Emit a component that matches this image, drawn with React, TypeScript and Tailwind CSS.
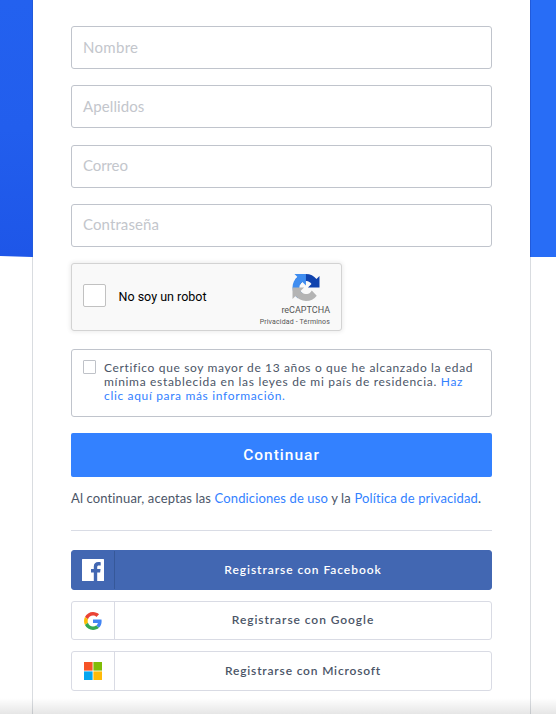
import React from "react";

const fields = [
  { label: "Nombre", box: "mt-[26px]", text: "tracking-[0.3px]" },
  { label: "Apellidos", box: "mt-4", text: "tracking-[0.1px]" },
  { label: "Correo", box: "mt-[17px] pb-0.5", text: "tracking-[-0.1px]" },
  { label: "Contraseña", box: "mt-4 pb-0.5", text: "tracking-[0.1px]" },
];

function RecaptchaLogo() {
  return (
    <svg width="28" height="27" viewBox="0 0 64 64">
      <path fill="#1043ae" d="M64 31.955l-.016-1.37V4.687l-7.16 7.16C50.965 4.674 42.033.093 32.03.093c-10.4 0-19.646 4.96-25.49 12.64l11.736 11.86a15.55 15.55 0 0 1 4.754-5.334c2.05-1.6 4.952-2.906 8.968-2.906.485 0 .86.057 1.135.163 4.976.393 9.288 3.14 11.828 7.124l-8.307 8.307L64 31.953" />
      <path fill="#3f8df0" d="M31.862.094l-1.37.016H4.594l7.16 7.16C4.58 13.147 0 22.08 0 32.082c0 10.4 4.96 19.646 12.64 25.49L24.5 45.835a15.55 15.55 0 0 1-5.334-4.754c-1.6-2.05-2.906-4.952-2.906-8.968 0-.485.057-.86.163-1.135.393-4.976 3.14-9.288 7.124-11.828l8.307 8.307L31.86.095" />
      <path fill="#b4b4b4" d="M.001 32.045l.016 1.37v25.898l7.16-7.16c5.86 7.173 14.79 11.754 24.793 11.754 10.4 0 19.646-4.96 25.49-12.64l-11.736-11.86a15.55 15.55 0 0 1-4.754 5.334c-2.05 1.6-4.952 2.906-8.968 2.906-.485 0-.86-.057-1.135-.163-4.976-.393-9.288-3.14-11.828-7.124l8.307-8.307L0 32.045" />
    </svg>
  );
}

function FacebookLogo() {
  return (
    <svg width="22" height="22" viewBox="0 0 22 22">
      <path fill="#fff" d="M.6 0h20.8a.6.6 0 0 1 .6.6v20.8a.6.6 0 0 1-.6.6h-6.2v-8.5h2.9l.5-3.4h-3.4V8c0-1 .4-1.6 1.7-1.6h1.8V3.3c-.5-.1-1.4-.2-2.5-.2-2.7 0-4.4 1.6-4.4 4.5v2.5H9v3.4h2.8V22H.6a.6.6 0 0 1-.6-.6V.6A.6.6 0 0 1 .6 0z" />
    </svg>
  );
}

function GoogleLogo() {
  return (
    <svg width="18" height="18" viewBox="0 0 48 48">
      <path fill="#EA4335" d="M24 9.5c3.54 0 6.71 1.22 9.21 3.6l6.85-6.85C35.9 2.38 30.47 0 24 0 14.62 0 6.51 5.38 2.56 13.22l7.98 6.19C12.43 13.72 17.74 9.5 24 9.5z" />
      <path fill="#4285F4" d="M46.98 24.55c0-1.57-.15-3.09-.38-4.55H24v9.02h12.94c-.58 2.96-2.26 5.48-4.78 7.18l7.73 6c4.51-4.18 7.09-10.36 7.09-17.65z" />
      <path fill="#FBBC05" d="M10.53 28.59c-.48-1.45-.76-2.99-.76-4.59s.27-3.14.76-4.59l-7.98-6.19C.92 16.46 0 20.12 0 24c0 3.88.92 7.54 2.56 10.78l7.97-6.19z" />
      <path fill="#34A853" d="M24 48c6.48 0 11.93-2.13 15.89-5.81l-7.73-6c-2.15 1.45-4.92 2.3-8.16 2.3-6.26 0-11.57-4.22-13.47-9.91l-7.98 6.19C6.51 42.62 14.62 48 24 48z" />
    </svg>
  );
}

function MicrosoftLogo() {
  return (
    <svg width="18" height="18" viewBox="0 0 18 18">
      <path fill="#f65326" d="M0 0h8.6v8.6H0z" />
      <path fill="#80bc06" d="M9.4 0H18v8.6H9.4z" />
      <path fill="#05a6f0" d="M0 9.4h8.6V18H0z" />
      <path fill="#ffba08" d="M9.4 9.4H18V18H9.4z" />
    </svg>
  );
}

export default function App() {
  return (
    <div className="relative h-[722px] w-[556px] overflow-hidden bg-white font-['Lato',sans-serif] text-[#4b5567]">
      <div className="flex h-[714px] justify-center bg-white">
        <div className="h-[257px] w-8 bg-linear-to-b from-[#2361ef] via-[#225eed] to-[#1e56e8] [clip-path:polygon(0_0,100%_0,100%_100%,0_256px)]" />
        <main className="h-[714px] w-[499px] border-x border-[#d9dce0] bg-white px-[38px] [border-image:linear-gradient(#215adb_257px,#d9dce0_257px)_1]">
          <form className="flex flex-col">
            {fields.map((f) => (
              <div key={f.label} className={`flex h-[43px] items-center rounded-[3px] border border-[#c0c4cc] pl-[11px] text-[15px] text-[#c3c6cc] ${f.box}`}>
                <span className={f.text}>{f.label}</span>
              </div>
            ))}

            <div className="mt-4 flex h-[68px] w-[271px] justify-between rounded-[3px] border border-[#d3d3d3] bg-[#f9f9f9] font-['Roboto',sans-serif] shadow-[0_0_4px_1px_rgba(0,0,0,0.08)]">
              <div className="flex items-center pl-[11px] pb-[3px]">
                <span className="h-[23px] w-[23px] rounded-[2px] border border-[#c1c1c1] bg-white" />
                <span className="ml-[12.5px] mt-[3px] text-[12.5px] text-black">No soy un robot</span>
              </div>
              <div className="flex flex-col items-end pt-[10px] pr-[11px] text-[#555]">
                <div className="mr-[10px]"><RecaptchaLogo /></div>
                <span className="mt-1 text-[9px] leading-[11px]">reCAPTCHA</span>
                <span className="mt-[2px] text-[7px] leading-[9px] tracking-[0.15px]">Privacidad - Términos</span>
              </div>
            </div>

            <div className="mt-[18px] flex h-[68px] rounded-[3px] border border-[#c0c4cc] pt-[10px] pl-[11px]">
              <span className="h-[14px] w-[13px] shrink-0 rounded-[1px] border border-[#bfc2c8]" />
              <p className="ml-2 mt-[1px] text-xs leading-[14px] whitespace-nowrap">
                <span className="block tracking-[0.64px]">Certifico que soy mayor de 13 años o que he alcanzado la edad</span>
                <span className="block tracking-[0.69px]">mínima establecida en las leyes de mi país de residencia. <a className="text-[#3381ff]">Haz</a></span>
                <a className="block tracking-[0.66px] text-[#3381ff]">clic aquí para más información.</a>
              </p>
            </div>

            <button type="button" className="mt-4 h-11 rounded-[2px] bg-[#3381ff] pt-px font-['Roboto',sans-serif] text-[15.5px] font-medium tracking-[1px] text-white">Continuar</button>
            <p className="mt-[11px] h-[21px] text-[13px] leading-5 tracking-[0.13px] whitespace-nowrap">
              Al continuar, aceptas las <a className="text-[#3381ff]">Condiciones de uso</a> y la <a className="text-[#3381ff]">Política de privacidad</a>.
            </p>
            <hr className="mt-[21px] border-[#d9dce5]" />

            <button type="button" className="mt-[19px] flex h-10 items-center rounded-[3px] border border-[#4267b2] bg-[#4267b2] text-xs font-semibold text-white">
              <span className="flex h-full w-[43px] items-center justify-center border-r border-[#365899]"><FacebookLogo /></span>
              <span className="flex-1 text-center tracking-[0.94px]">Registrarse con Facebook</span>
            </button>
            <button type="button" className="mt-[11px] flex h-[39px] items-center rounded-[3px] border border-[#d9dbe4] text-xs font-semibold">
              <span className="flex h-full w-[43px] items-center justify-center border-r border-[#d9dbe4]"><GoogleLogo /></span>
              <span className="flex-1 pb-px text-center tracking-[0.93px]">Registrarse con Google</span>
            </button>
            <button type="button" className="mt-[11px] flex h-10 items-center rounded-[3px] border border-[#d9dbe4] text-xs font-semibold">
              <span className="flex h-full w-[43px] items-center justify-center border-r border-[#d9dbe4]"><MicrosoftLogo /></span>
              <span className="flex-1 text-center tracking-[0.82px]">Registrarse con Microsoft</span>
            </button>
          </form>
        </main>
        <div className="h-[257px] flex-1 bg-[#286df6]" />
      </div>
      <div className="pointer-events-none absolute inset-x-0 top-[698px] h-4 bg-linear-to-b from-transparent to-black/10" />
    </div>
  );
}
